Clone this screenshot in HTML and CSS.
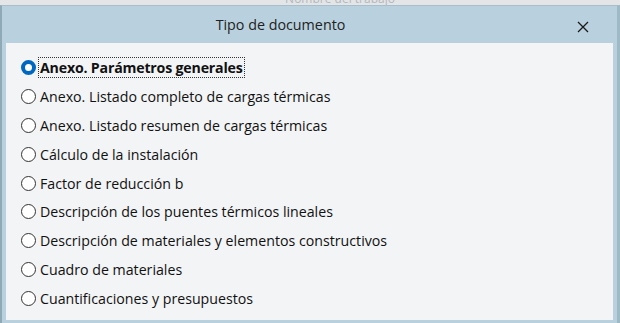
FILE: index.html
```html
<!DOCTYPE html>
<html lang="es">
<head>
    <meta charset="UTF-8">
    <title>Tipo de documento</title>
    <link rel="stylesheet" href="styles.css">
</head>
<body>
    <div class="top-strip">
        <span class="behind-text">Nombre del trabajo</span>
    </div>
    <div class="dialog">
        <div class="dialog-title">
            <span class="title-text">Tipo de documento</span>
            <button class="close-btn" aria-label="Cerrar">
                <svg width="12" height="12" viewBox="0 0 12 12">
                    <path d="M1 1 L11 11 M11 1 L1 11" stroke="#1a1a1a" stroke-width="1.3" fill="none"/>
                </svg>
            </button>
        </div>
        <div class="dialog-body">
            <label class="option">
                <input type="radio" name="doc" checked>
                <span class="radio"></span>
                <span class="option-text focused">Anexo. Parámetros generales</span>
            </label>
            <label class="option">
                <input type="radio" name="doc">
                <span class="radio"></span>
                <span class="option-text">Anexo. Listado completo de cargas térmicas</span>
            </label>
            <label class="option">
                <input type="radio" name="doc">
                <span class="radio"></span>
                <span class="option-text">Anexo. Listado resumen de cargas térmicas</span>
            </label>
            <label class="option">
                <input type="radio" name="doc">
                <span class="radio"></span>
                <span class="option-text">Cálculo de la instalación</span>
            </label>
            <label class="option">
                <input type="radio" name="doc">
                <span class="radio"></span>
                <span class="option-text">Factor de reducción b</span>
            </label>
            <label class="option">
                <input type="radio" name="doc">
                <span class="radio"></span>
                <span class="option-text">Descripción de los puentes térmicos lineales</span>
            </label>
            <label class="option">
                <input type="radio" name="doc">
                <span class="radio"></span>
                <span class="option-text">Descripción de materiales y elementos constructivos</span>
            </label>
            <label class="option">
                <input type="radio" name="doc">
                <span class="radio"></span>
                <span class="option-text">Cuadro de materiales</span>
            </label>
            <label class="option">
                <input type="radio" name="doc">
                <span class="radio"></span>
                <span class="option-text">Cuantificaciones y presupuestos</span>
            </label>
        </div>
    </div>
</body>
</html>
```

FILE: styles.css
```css
* {
    margin: 0;
    padding: 0;
    box-sizing: border-box;
}

body {
    font-family: "Open Sans", "Noto Sans", sans-serif;
    background: #e3e5e7;
    width: 620px;
    height: 323px;
    overflow: hidden;
    color: #111;
}

.top-strip {
    height: 5px;
    overflow: hidden;
    display: flex;
    justify-content: center;
}

.behind-text {
    font-size: 12px;
    color: #b4b8bd;
    margin-top: -10px;
    padding-left: 60px;
}

.dialog {
    height: 318px;
    background: #b9d1de;
    border-left: 2px solid #8fa9b7;
    border-right: 3px solid #9fb9c7;
    border-top: 1px solid #a7bfcc;
    padding: 0 4px 0 4px;
    display: flex;
    flex-direction: column;
}

.dialog-title {
    height: 37px;
    display: flex;
    align-items: center;
    justify-content: center;
    position: relative;
}

.title-text {
    font-size: 14.3px;
    color: #222;
    margin-right: 58px;
}

.close-btn {
    position: absolute;
    right: 24px;
    top: 15px;
    border: none;
    background: none;
    width: 12px;
    height: 12px;
}

.dialog-body {
    flex: 1;
    background: #f3f4f6;
    margin-bottom: 3px;
    padding: 10.5px 0 0 15px;
    display: flex;
    flex-direction: column;
}

.option {
    display: flex;
    align-items: center;
    height: 28.8px;
    flex-shrink: 0;
    font-size: 14.2px;
    color: #111;
}

.option input {
    display: none;
}

.radio {
    width: 15px;
    height: 15px;
    border: 1px solid #333;
    border-radius: 50%;
    background: #fff;
    margin-right: 2px;
    flex-shrink: 0;
}

.option input:checked + .radio {
    border: 4px solid #0067c0;
    background: #fff;
}

.option-text {
    padding: 0 1px;
    border: 1px dotted transparent;
}

.option-text.focused {
    font-weight: 700;
    letter-spacing: -0.2px;
    border-color: #333;
}
```
